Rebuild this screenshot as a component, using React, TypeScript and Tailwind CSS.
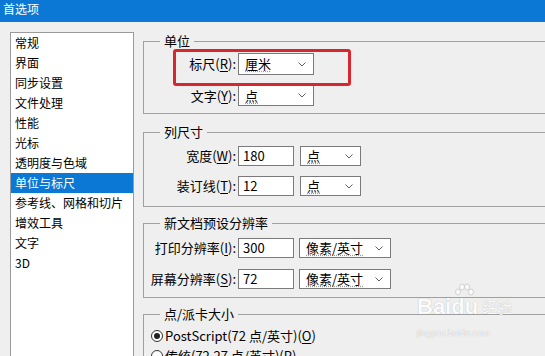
import React from "react";

const FONT = "font-['Noto_Sans_CJK_SC','Noto_Sans',sans-serif]";

const navItems = [
  "常规",
  "界面",
  "同步设置",
  "文件处理",
  "性能",
  "光标",
  "透明度与色域",
  "单位与标尺",
  "参考线、网格和切片",
  "增效工具",
  "文字",
  "3D",
];

function Chevron() {
  return (
    <svg width="8" height="5" viewBox="0 0 8 5" className="shrink-0">
      <path d="M0.5 0.5 L4 4 L7.5 0.5" fill="none" stroke="#606060" strokeWidth="1" />
    </svg>
  );
}

function Label({ text, mnemonic }: { text: string; mnemonic: string }) {
  return (
    <div className="w-[93px] shrink-0 text-right whitespace-nowrap pr-[1px]">
      {text}(<span className="underline underline-offset-2">{mnemonic}</span>):
    </div>
  );
}

function Select({ value, w, h = "h-[20px]" }: { value: string; w: string; h?: string }) {
  return (
    <div
      className={`${w} ${h} flex items-center justify-between bg-white border border-[#7a7a7a] pl-[6px] pr-[7px]`}
    >
      <span className="underline decoration-dotted underline-offset-2 decoration-[#999]">{value}</span>
      <Chevron />
    </div>
  );
}

function Field({ value }: { value: string }) {
  return (
    <div className="w-[56px] h-[20px] flex items-center bg-white border border-[#7a7a7a] pl-[4px]">
      {value}
    </div>
  );
}

function Group({
  title,
  className,
  children,
}: {
  title: string;
  className: string;
  children: React.ReactNode;
}) {
  return (
    <fieldset className={`border border-[#a0a0a0] w-[430px] ${className}`}>
      <legend className="ml-[16px] px-[4px] leading-[16px]">{title}</legend>
      {children}
    </fieldset>
  );
}

function Radio({ checked, children }: { checked?: boolean; children: React.ReactNode }) {
  return (
    <div className="flex items-center h-[20px] pl-[7px] gap-[2px] whitespace-nowrap">
      <span className="w-[12px] h-[12px] rounded-full border border-[#333] bg-white flex items-center justify-center">
        {checked && <span className="w-[6px] h-[6px] rounded-full bg-[#222]" />}
      </span>
      <span>{children}</span>
    </div>
  );
}

export default function App() {
  return (
    <div className={`relative w-[545px] h-[356px] overflow-hidden bg-[#efefef] text-black ${FONT}`}>
      {/* Title bar */}
      <div className="h-[22px] bg-[#0a78d4] text-white text-[12px] leading-[18px] pl-[3px]">首选项</div>

      <div className="flex">
        {/* Category list */}
        <div className="shrink-0 ml-[10px] mt-[10px] w-[124px] h-[330px] bg-white border border-[#9a9a9a] text-[12px]">
          {navItems.map((item) => (
            <div
              key={item}
              className={`h-[20px] leading-[20px] pl-[4px] whitespace-nowrap ${
                item === "单位与标尺" ? "bg-[#0a78d4] text-white" : ""
              }`}
            >
              {item}
            </div>
          ))}
        </div>

        {/* Settings */}
        <div className="shrink-0 ml-[9px] text-[13px]">
          <Group title="单位" className="mt-[11px] pt-[4px] pb-[7px]">
            <div className="flex items-center">
              <Label text="标尺" mnemonic="R" />
              <div className="ml-[1px]">
                <Select value="厘米" w="w-[76px]" h="h-[22px]" />
              </div>
            </div>
            <div className="flex items-center mt-[10px]">
              <Label text="文字" mnemonic="Y" />
              <div className="ml-[1px]">
                <Select value="点" w="w-[76px]" h="h-[21px]" />
              </div>
            </div>
          </Group>

          <Group title="列尺寸" className="mt-[10px] pt-[6px] pb-[10px]">
            <div className="flex items-center">
              <Label text="宽度" mnemonic="W" />
              <div className="ml-[1px] flex gap-[6px]">
                <Field value="180" />
                <Select value="点" w="w-[61px]" />
              </div>
            </div>
            <div className="flex items-center mt-[10px]">
              <Label text="装订线" mnemonic="T" />
              <div className="ml-[1px] flex gap-[6px]">
                <Field value="12" />
                <Select value="点" w="w-[61px]" />
              </div>
            </div>
          </Group>

          <Group title="新文档预设分辨率" className="mt-[8px] pt-[7px] pb-[8px]">
            <div className="flex items-center">
              <Label text="打印分辨率" mnemonic="I" />
              <div className="ml-[1px] flex gap-[5px]">
                <Field value="300" />
                <Select value="像素/英寸" w="w-[92px]" />
              </div>
            </div>
            <div className="flex items-center mt-[11px]">
              <Label text="屏幕分辨率" mnemonic="S" />
              <div className="ml-[1px] flex gap-[5px]">
                <Field value="72" />
                <Select value="像素/英寸" w="w-[92px]" />
              </div>
            </div>
          </Group>

          <Group title="点/派卡大小" className="mt-[8px] pt-[4px] pb-[8px]">
            <Radio checked>
              PostScript(72 点/英寸)(<span className="underline underline-offset-2">O</span>)
            </Radio>
            <Radio>
              传统(72.27 点/英寸)(<span className="underline underline-offset-2">P</span>)
            </Radio>
          </Group>
        </div>
      </div>

      {/* Red highlight annotation */}
      <div className="absolute left-[173px] top-[49px] w-[178px] h-[37px] border-[3px] border-[#d8262e] rounded-[3px]" />

      {/* Watermark */}
      <div className="absolute left-[417px] top-[296px] w-[100px] opacity-80 pointer-events-none select-none">
        <div className="flex items-end text-white font-['Liberation_Sans',sans-serif] font-bold text-[22px] leading-[22px] [text-shadow:0_0_1px_#9a9a9a]">
          <span>Bai</span>
          <span className="relative">
            du
            <svg width="22" height="16" viewBox="0 0 22 16" className="absolute left-[2px] -top-[13px]">
              <ellipse cx="5" cy="9" rx="2.4" ry="3" fill="#fff" stroke="#aaa" strokeWidth="0.6" />
              <ellipse cx="9" cy="4" rx="2.4" ry="3" fill="#fff" stroke="#aaa" strokeWidth="0.6" />
              <ellipse cx="14" cy="4" rx="2.4" ry="3" fill="#fff" stroke="#aaa" strokeWidth="0.6" />
              <ellipse cx="18" cy="9" rx="2.4" ry="3" fill="#fff" stroke="#aaa" strokeWidth="0.6" />
            </svg>
          </span>
          <span className="ml-[4px] text-[15px] font-normal font-['Noto_Sans_CJK_SC',sans-serif]">经验</span>
        </div>
        <div className="mt-[10px] text-[9px] leading-[10px] text-white [text-shadow:0_0_1px_#9a9a9a] font-['Liberation_Sans',sans-serif]">
          jingyan.baidu.com
        </div>
      </div>
    </div>
  );
}
